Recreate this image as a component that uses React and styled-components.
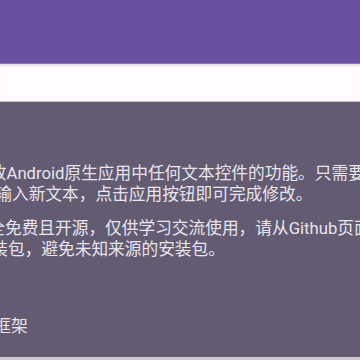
import React from "react";
import styled, { createGlobalStyle } from "styled-components";

const Global = createGlobalStyle`
  html, body { margin: 0; padding: 0; background: #625B71; }
  body { font-family: Roboto, "Noto Sans CJK SC", sans-serif; }
`;

const Screen = styled.div`
  width: 360px;
  height: 360px;
  display: flex;
  flex-direction: column;
  overflow: hidden;
`;

const AppBar = styled.header`
  height: 63px;
  flex: none;
  background: #6950A3;
  border-bottom: 1px solid #8C77BE;
`;

const TabStrip = styled.div`
  height: 37px;
  flex: none;
  background: #FFFBFE;
  box-shadow: inset 0 3px 3px -2px rgba(0, 0, 0, 0.18);
  border-bottom: 1px solid #C6C2CB;
`;

const Panel = styled.section`
  flex: 1;
  min-height: 0;
  background: #625B71;
  padding-top: 61px;
  overflow: hidden;
`;

const Paragraph = styled.div`
  margin-bottom: ${(p) => p.$gap || 0}px;
`;

const Line = styled.div`
  font-size: 16.7px;
  line-height: 21px;
  height: 21px;
  color: #E9E5ED;
  white-space: nowrap;
  margin-left: ${(p) => p.$shift}px;
`;

const BottomEdge = styled.div`
  height: 3px;
  flex: none;
  background: #CFCBD3;
`;

export default function App() {
  return (
    <>
      <Global />
      <Screen>
        <AppBar />
        <TabStrip />
        <Panel>
          <Paragraph $gap={13}>
            <Line $shift={-10.2}>改Android原生应用中任何文本控件的功能。只需要</Line>
            <Line $shift={-4.7}>输入新文本，点击应用按钮即可完成修改。</Line>
          </Paragraph>
          <Paragraph $gap={56}>
            <Line $shift={-11.7}>全免费且开源，仅供学习交流使用，请从Github页面</Line>
            <Line $shift={-8.7}>装包，避免未知来源的安装包。</Line>
          </Paragraph>
          <Paragraph>
            <Line $shift={-5.7}>框架</Line>
          </Paragraph>
        </Panel>
        <BottomEdge />
      </Screen>
    </>
  );
}
